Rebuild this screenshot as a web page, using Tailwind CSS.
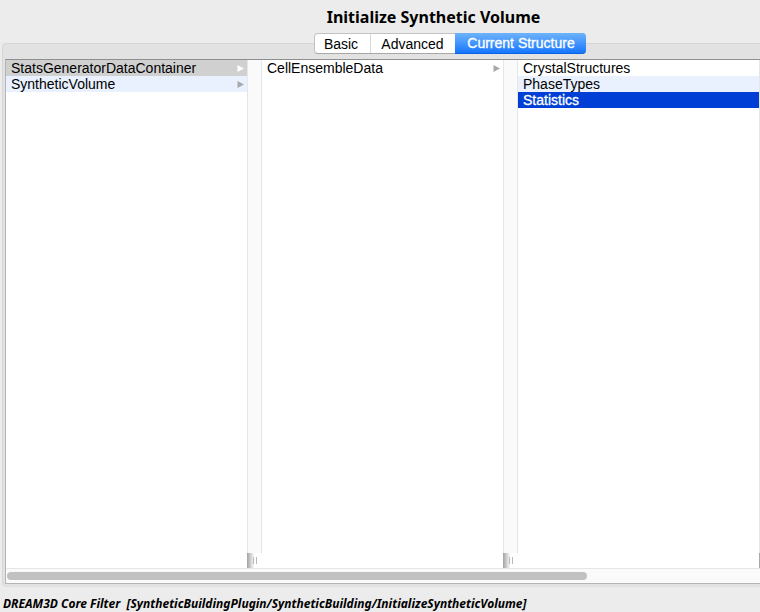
<!DOCTYPE html>
<html lang="en">
<head>
<meta charset="utf-8">
<title>Initialize Synthetic Volume</title>
<script src="https://cdn.jsdelivr.net/npm/@tailwindcss/browser@4"></script>
</head>
<body class="flex h-screen flex-col overflow-hidden bg-[#ececec] font-['Liberation_Sans',sans-serif] text-sm leading-4 text-black">
  <header class="flex justify-center pt-1 pl-[107px]">
    <h1 class="font-['Noto_Sans',sans-serif] text-base leading-[26px] font-bold whitespace-nowrap">Initialize Synthetic Volume</h1>
  </header>

  <nav class="relative z-10 mt-[3px] flex justify-center pl-[139px]" aria-label="Sections">
    <div class="flex h-[21px] rounded border border-[#c2c2c2] border-b-[#a8a8a8] bg-white">
      <button class="w-[56px] rounded-l border-r border-[#d9d9d9] pr-0.5">Basic</button>
      <button class="w-[84px]">Advanced</button>
      <button class="-my-px -mr-px w-[131px] rounded-r border-b border-[#0f62e0] bg-linear-to-b from-[#6db3fa] to-[#1175fe] pl-0.5 text-white [-webkit-text-stroke:0.3px_white]" aria-current="page">Current Structure</button>
    </div>
  </nav>

  <main class="-mt-[11px] ml-[2px] flex min-h-0 flex-1 flex-col rounded-l border border-r-0 border-[#d6d6d6] border-b-[#e2e2e2] bg-[#e2e2e2] pt-[15px] pb-[2px] pl-[2px]">
    <div class="flex min-h-0 flex-1 flex-col border-t border-b border-l border-t-[#8e8e8e] border-b-[#b4b4b4] border-l-[#b4b4b4] bg-white">
      <div class="flex min-h-0 flex-1 overflow-hidden">
        <section class="flex w-64 shrink-0" aria-label="Data containers">
          <ul class="flex-1">
            <li><button class="flex h-4 w-full items-center justify-between bg-[#d0d0d0] pr-[3px] pl-[5px]"><span>StatsGeneratorDataContainer</span><svg class="h-[7px] w-[7px] fill-white" viewBox="0 0 7 7" aria-hidden="true"><path d="M0.5 0L7 3.5L0.5 7Z"/></svg></button></li>
            <li><button class="flex h-4 w-full items-center justify-between bg-[#e9f1ff] pr-[3px] pl-[5px]"><span>SyntheticVolume</span><svg class="h-[7px] w-[7px] fill-[#a9a9a9]" viewBox="0 0 7 7" aria-hidden="true"><path d="M0.5 0L7 3.5L0.5 7Z"/></svg></button></li>
          </ul>
          <div class="flex w-[15px] flex-col">
            <div class="flex-1 border-x border-[#e6e6e6] bg-[#fafafa]"></div>
            <svg class="h-[15px] w-[15px]" viewBox="0 0 15 15" aria-hidden="true"><defs><linearGradient id="g1"><stop stop-color="#a2a2a2"/><stop offset="1" stop-color="#fafafa"/></linearGradient></defs><path fill="url(#g1)" d="M0 0H7V15H0Z"/><path fill="#b8b8b8" d="M6 4H7V11H6ZM9 4H10V11H9Z"/></svg>
          </div>
        </section>
        <section class="flex w-64 shrink-0" aria-label="Attribute matrices">
          <ul class="flex-1">
            <li><button class="flex h-4 w-full items-center justify-between pr-[3px] pl-[5px]"><span>CellEnsembleData</span><svg class="h-[7px] w-[7px] fill-[#a9a9a9]" viewBox="0 0 7 7" aria-hidden="true"><path d="M0.5 0L7 3.5L0.5 7Z"/></svg></button></li>
          </ul>
          <div class="flex w-[15px] flex-col">
            <div class="flex-1 border-x border-[#e6e6e6] bg-[#fafafa]"></div>
            <svg class="h-[15px] w-[15px]" viewBox="0 0 15 15" aria-hidden="true"><path fill="url(#g1)" d="M0 0H7V15H0Z"/><path fill="#b8b8b8" d="M6 4H7V11H6ZM9 4H10V11H9Z"/></svg>
          </div>
        </section>
        <section class="flex w-64 shrink-0" aria-label="Data arrays">
          <ul class="flex-1">
            <li><button class="flex h-4 w-full items-center pl-[5px]">CrystalStructures</button></li>
            <li><button class="flex h-4 w-full items-center bg-[#e9f1ff] pl-[5px]">PhaseTypes</button></li>
            <li><button class="flex h-4 w-full items-center bg-[#003fd6] pl-[5px] text-white [-webkit-text-stroke:0.3px_white]">Statistics</button></li>
          </ul>
          <div class="flex w-[15px] flex-col">
            <div class="flex-1 border-x border-[#e6e6e6] bg-[#fafafa]"></div>
            <svg class="h-[15px] w-[15px]" viewBox="0 0 15 15" aria-hidden="true"><path fill="url(#g1)" d="M0 0H7V15H0Z"/></svg>
          </div>
        </section>
      </div>
      <div class="border-t border-[#e6e6e6] bg-[#fafafa] pt-[3px] pb-[3px] pl-px">
        <div class="h-2 w-[77%] rounded-full bg-[#c1c1c1]"></div>
      </div>
    </div>
  </main>

  <footer class="pt-[9px] pl-[3px] font-['Noto_Sans',sans-serif] text-xs leading-4 font-bold whitespace-pre italic">DREAM3D Core Filter  [SyntheticBuildingPlugin/SyntheticBuilding/InitializeSyntheticVolume]</footer>
</body>
</html>
